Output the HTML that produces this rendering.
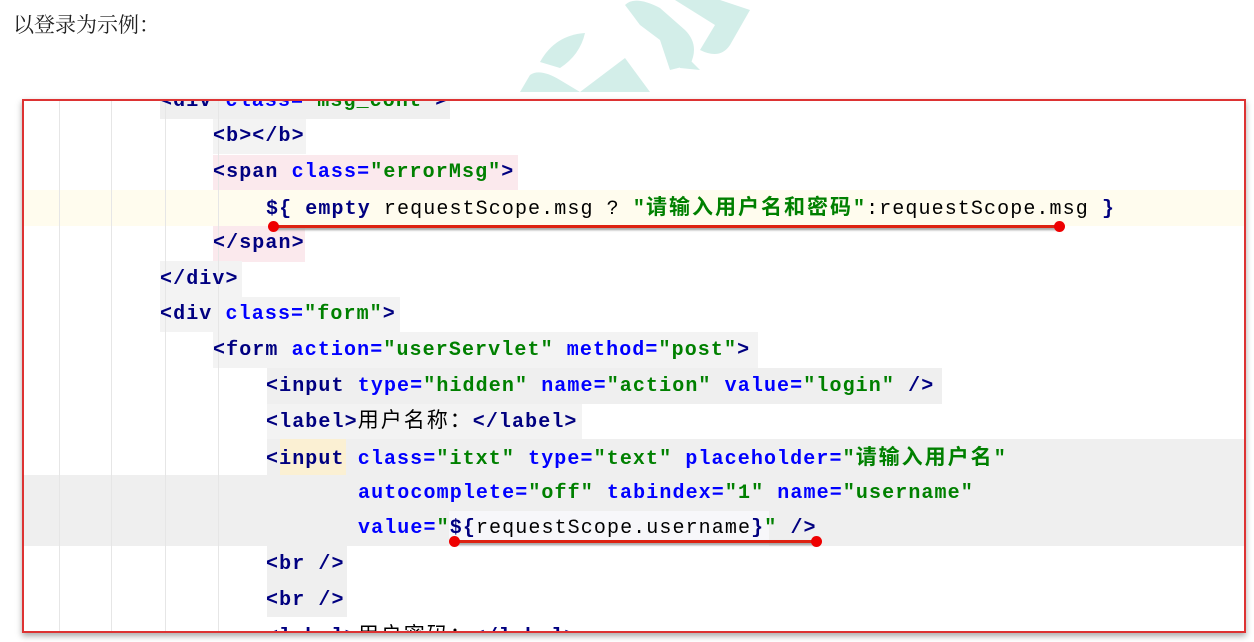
<!DOCTYPE html>
<html><head><meta charset="utf-8"><style>
body{margin:0;width:1254px;height:642px;background:#fff;position:relative;overflow:hidden;font-family:"Liberation Serif","Noto Serif CJK SC",serif}
.t{position:absolute;left:13px;top:9px;font-size:21px;color:#222}
.box{position:absolute;left:22px;top:99px;width:1220px;height:530px;border:2px solid #d33;box-shadow:0 3px 6px #aaa;overflow:hidden;background:#fff}
.g{position:absolute;top:0;bottom:0;width:1px;background:#e6e6e6}
.bg{position:absolute}
.l{position:absolute;font-family:"Liberation Mono","Noto Sans CJK SC",monospace;font-size:20px;letter-spacing:1.1px;white-space:pre;line-height:24px;height:24px;color:#000}
.k{color:#000080;font-weight:bold}.a{color:#0000ff;font-weight:bold}.s{color:#008000;font-weight:bold}
.c{font-family:"Noto Sans CJK SC",sans-serif;font-size:21px;letter-spacing:2px;line-height:20px;vertical-align:0}
.u{position:absolute;height:3px;background:#d21;box-shadow:0 2px 2px #999}
.d{position:absolute;width:11px;height:11px;border-radius:50%;background:#e00}
</style></head><body>
<div class="t">以登录为示例：</div>
<svg style="position:absolute;left:520px;top:0" width="260" height="92"><g fill="#d3eee9">
<path d="M10 75 Q20 68 40 80 L60 92 L0 92Z"/><path d="M20 62 Q35 35 65 33 Q60 55 40 68Z"/>
<path d="M60 92 L105 58 L130 92Z"/><path d="M105 5 Q115 -5 140 8 L165 30 Q180 45 170 65 L150 70 L140 40 L120 25Z"/>
<path d="M155 0 L200 0 L230 10 L210 45 Q200 60 180 50 L195 25Z"/><path d="M150 30 L165 55 L180 70 L160 68Z"/></g></svg>
<div class="box">
<div class="bg" style="left:0;right:0;top:89px;height:36px;background:#fffcee"></div>
<div class="bg" style="left:243px;right:0;top:338px;height:36px;background:#efefef"></div>
<div class="bg" style="left:0;right:0;top:374px;height:71px;background:#efefef"></div>
<div class="bg" style="left:425px;width:320px;top:410px;height:35px;background:#f7f7fa"></div>
<div class="bg" style="left:136px;width:290px;top:0;height:18px;background:#efefef"></div>
<div class="bg" style="left:189px;width:93px;top:18px;height:35px;background:#f3f3f3"></div>
<div class="bg" style="left:189px;width:305px;top:54px;height:35px;background:#fbe9ed"></div>
<div class="bg" style="left:189px;width:92px;top:125px;height:36px;background:#fbe9ed"></div>
<div class="bg" style="left:136px;width:82px;top:160px;height:36px;background:#f3f3f3"></div>
<div class="bg" style="left:136px;width:240px;top:196px;height:35px;background:#f3f3f3"></div>
<div class="bg" style="left:189px;width:545px;top:231px;height:36px;background:#f3f3f3"></div>
<div class="bg" style="left:243px;width:675px;top:267px;height:36px;background:#efefef"></div>
<div class="bg" style="left:243px;width:315px;top:303px;height:35px;background:#f3f3f3"></div>
<div class="bg" style="left:256px;width:66px;top:338px;height:36px;background:#fbf0d3"></div>
<div class="bg" style="left:243px;width:80px;top:445px;height:71px;background:#efefef"></div>
<div class="g" style="left:35px"></div><div class="g" style="left:87px"></div><div class="g" style="left:141px"></div><div class="g" style="left:194px"></div>
<div class="l" style="left:136px;top:-11px"><span class="k">&lt;div</span> <span class="a">class=</span><span class="s">"msg_cont"</span><span class="k">&gt;</span></div>
<div class="l" style="left:189px;top:24px"><span class="k">&lt;b&gt;&lt;/b&gt;</span></div>
<div class="l" style="left:189px;top:60px"><span class="k">&lt;span</span> <span class="a">class=</span><span class="s">"errorMsg"</span><span class="k">&gt;</span></div>
<div class="l" style="left:242px;top:95px"><span class="k">${ empty</span> requestScope.msg ? <span class="s">"<span class="c">请输入用户名和密码</span>"</span>:requestScope.msg <span class="k">}</span></div>
<div class="l" style="left:189px;top:131px"><span class="k">&lt;/span&gt;</span></div>
<div class="l" style="left:136px;top:167px"><span class="k">&lt;/div&gt;</span></div>
<div class="l" style="left:136px;top:202px"><span class="k">&lt;div</span> <span class="a">class=</span><span class="s">"form"</span><span class="k">&gt;</span></div>
<div class="l" style="left:189px;top:238px"><span class="k">&lt;form</span> <span class="a">action=</span><span class="s">"userServlet"</span> <span class="a">method=</span><span class="s">"post"</span><span class="k">&gt;</span></div>
<div class="l" style="left:242px;top:274px"><span class="k">&lt;input</span> <span class="a">type=</span><span class="s">"hidden"</span> <span class="a">name=</span><span class="s">"action"</span> <span class="a">value=</span><span class="s">"login"</span> <span class="k">/&gt;</span></div>
<div class="l" style="left:242px;top:308px"><span class="k">&lt;label&gt;</span><span class="c" style="font-weight:normal">用户名称：</span><span class="k">&lt;/label&gt;</span></div>
<div class="l" style="left:242px;top:345px"><span class="k">&lt;input</span> <span class="a">class=</span><span class="s">"itxt"</span> <span class="a">type=</span><span class="s">"text"</span> <span class="a">placeholder=</span><span class="s">"<span class="c">请输入用户名</span>"</span></div>
<div class="l" style="left:334px;top:381px"><span class="a">autocomplete=</span><span class="s">"off"</span> <span class="a">tabindex=</span><span class="s">"1"</span> <span class="a">name=</span><span class="s">"username"</span></div>
<div class="l" style="left:334px;top:416px"><span class="a">value=</span><span class="s">"</span><span class="k">${</span>requestScope.username<span class="k">}</span><span class="s">"</span> <span class="k">/&gt;</span></div>
<div class="l" style="left:242px;top:452px"><span class="k">&lt;br</span> <span class="k">/&gt;</span></div>
<div class="l" style="left:242px;top:488px"><span class="k">&lt;br</span> <span class="k">/&gt;</span></div>
<div class="l" style="left:242px;top:523px"><span class="k">&lt;label&gt;</span><span class="c">用户密码：</span><span class="k">&lt;/label&gt;</span></div>
<div class="u" style="left:250px;width:786px;top:124px"></div><div class="d" style="left:244px;top:120px"></div><div class="d" style="left:1030px;top:120px"></div>
<div class="u" style="left:430px;width:363px;top:439px"></div><div class="d" style="left:425px;top:435px"></div><div class="d" style="left:787px;top:435px"></div>
</div>
</body></html>
